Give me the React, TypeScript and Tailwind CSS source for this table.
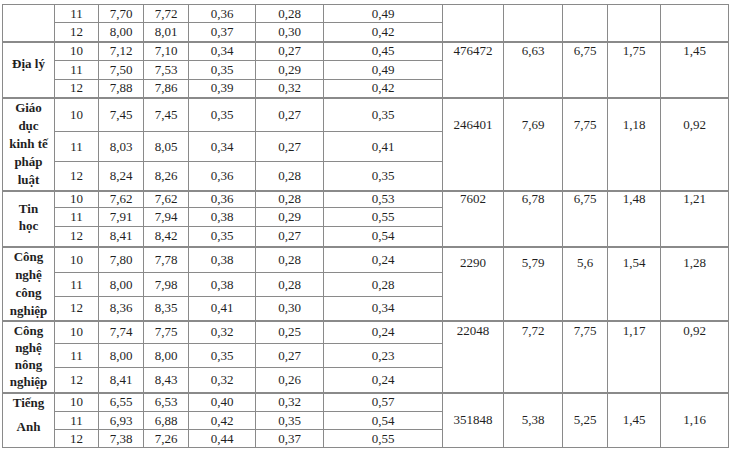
import React from 'react'

type Line = { t: string; c?: string }

type Group = {
  name: Line[]
  nameCls: string
  rightCls: string
  rows: string[][]
  heights: string[]
  right: string[]
}

const GROUPS: Group[] = [
  {
    name: [],
    nameCls: '',
    rightCls: '',
    rows: [
      ['11', '7,70', '7,72', '0,36', '0,28', '0,49'],
      ['12', '8,00', '8,01', '0,37', '0,30', '0,42'],
    ],
    heights: ['h-[18px]', 'h-[19px]'],
    right: ['', '', '', '', ''],
  },
  {
    name: [{ t: 'Địa lý' }],
    nameCls: 'pt-[12px]',
    rightCls: 'pt-[1px]',
    rows: [
      ['10', '7,12', '7,10', '0,34', '0,27', '0,45'],
      ['11', '7,50', '7,53', '0,35', '0,29', '0,49'],
      ['12', '7,88', '7,86', '0,39', '0,32', '0,42'],
    ],
    heights: ['h-[19px]', 'h-[19px]', 'h-[18px]'],
    right: ['476472', '6,63', '6,75', '1,75', '1,45'],
  },
  {
    name: [{ t: 'Giáo' }, { t: 'dục' }, { t: 'kinh tế' }, { t: 'pháp' }, { t: 'luật' }],
    nameCls: 'pt-0',
    rightCls: 'pt-[19px]',
    rows: [
      ['10', '7,45', '7,45', '0,35', '0,27', '0,35'],
      ['11', '8,03', '8,05', '0,34', '0,27', '0,41'],
      ['12', '8,24', '8,26', '0,36', '0,28', '0,35'],
    ],
    heights: ['h-[34px]', 'h-[30px]', 'h-[29px]'],
    right: ['246401', '7,69', '7,75', '1,18', '0,92'],
  },
  {
    name: [{ t: 'Tin', c: 'h-[17px]' }, { t: 'học', c: 'h-[17px]' }],
    nameCls: 'pt-[8px]',
    rightCls: 'pt-0',
    rows: [
      ['10', '7,62', '7,62', '0,36', '0,28', '0,53'],
      ['11', '7,91', '7,94', '0,38', '0,29', '0,55'],
      ['12', '8,41', '8,42', '0,35', '0,27', '0,54'],
    ],
    heights: ['h-[17px]', 'h-[19px]', 'h-[20px]'],
    right: ['7602', '6,78', '6,75', '1,48', '1,21'],
  },
  {
    name: [{ t: 'Công' }, { t: 'nghệ' }, { t: 'công' }, { t: 'nghiệp' }],
    nameCls: 'pt-0',
    rightCls: 'pt-[8px]',
    rows: [
      ['10', '7,80', '7,78', '0,38', '0,28', '0,24'],
      ['11', '8,00', '7,98', '0,38', '0,28', '0,28'],
      ['12', '8,36', '8,35', '0,41', '0,30', '0,34'],
    ],
    heights: ['h-[26px]', 'h-[24px]', 'h-[24px]'],
    right: ['2290', '5,79', '5,6', '1,54', '1,28'],
  },
  {
    name: [
      { t: 'Công', c: 'h-[17px]' }, { t: 'nghệ', c: 'h-[17px]' },
      { t: 'nông', c: 'h-[17px]' }, { t: 'nghiệp', c: 'h-[17px]' },
    ],
    nameCls: 'pt-0',
    rightCls: 'pt-[2px]',
    rows: [
      ['10', '7,74', '7,75', '0,32', '0,25', '0,24'],
      ['11', '8,00', '8,00', '0,35', '0,27', '0,23'],
      ['12', '8,41', '8,43', '0,32', '0,26', '0,24'],
    ],
    heights: ['h-[23px]', 'h-[24px]', 'h-[25px]'],
    right: ['22048', '7,72', '7,75', '1,17', '0,92'],
  },
  {
    name: [{ t: 'Tiếng' }, { t: 'Anh', c: 'mt-[6px]' }],
    nameCls: 'pt-0',
    rightCls: 'pt-[19px]',
    rows: [
      ['10', '6,55', '6,53', '0,40', '0,32', '0,57'],
      ['11', '6,93', '6,88', '0,42', '0,35', '0,54'],
      ['12', '7,38', '7,26', '0,44', '0,37', '0,55'],
    ],
    heights: ['h-[19px]', 'h-[18px]', 'h-[18px]'],
    right: ['351848', '5,38', '5,25', '1,45', '1,16'],
  },
]

const COLS = [
  'w-[52px]', 'w-[44px]', 'w-[45px]', 'w-[45px]', 'w-[67px]', 'w-[68px]',
  'w-[119px]', 'w-[61px]', 'w-[59px]', 'w-[45px]', 'w-[53px]', 'w-[68px]',
]

export default function App() {
  return (
    <div className="w-[730px] h-[454px] bg-white pt-[4px] pl-[2px] overflow-hidden">
      <table className="table-fixed border-collapse w-[726px] text-[13px] text-[#1f1f1f] font-['Liberation_Serif','Times_New_Roman',serif]">
        <colgroup>
          {COLS.map((c, i) => <col key={i} className={c} />)}
        </colgroup>
        <tbody>
          {GROUPS.map((g, gi) =>
            g.rows.map((r, ri) => {
              const top = ri === 0 && gi > 0 ? 'border-t-2' : ''
              return (
                <tr key={`${gi}-${ri}`} className={g.heights[ri]}>
                  {ri === 0 && (
                    <td rowSpan={g.rows.length}
                      className={`p-0 align-top text-center font-bold leading-[18px] border border-[#8a8a8a] ${top} ${g.nameCls}`}>
                      {g.name.map(n => <div key={n.t} className={`block ${n.c ?? ''}`}>{n.t}</div>)}
                    </td>
                  )}
                  {r.map((v, ci) => (
                    <td key={ci} className={`p-0 leading-[14px] text-center align-middle border border-[#8a8a8a] ${top}`}>
                      {v}
                    </td>
                  ))}
                  {ri === 0 && g.right.map((v, ci) => (
                    <td key={`r${ci}`} rowSpan={g.rows.length}
                      className={`p-0 leading-[14px] text-center align-top border border-[#8a8a8a] ${top} ${g.rightCls}`}>
                      {v}
                    </td>
                  ))}
                </tr>
              )
            })
          )}
        </tbody>
      </table>
    </div>
  )
}
